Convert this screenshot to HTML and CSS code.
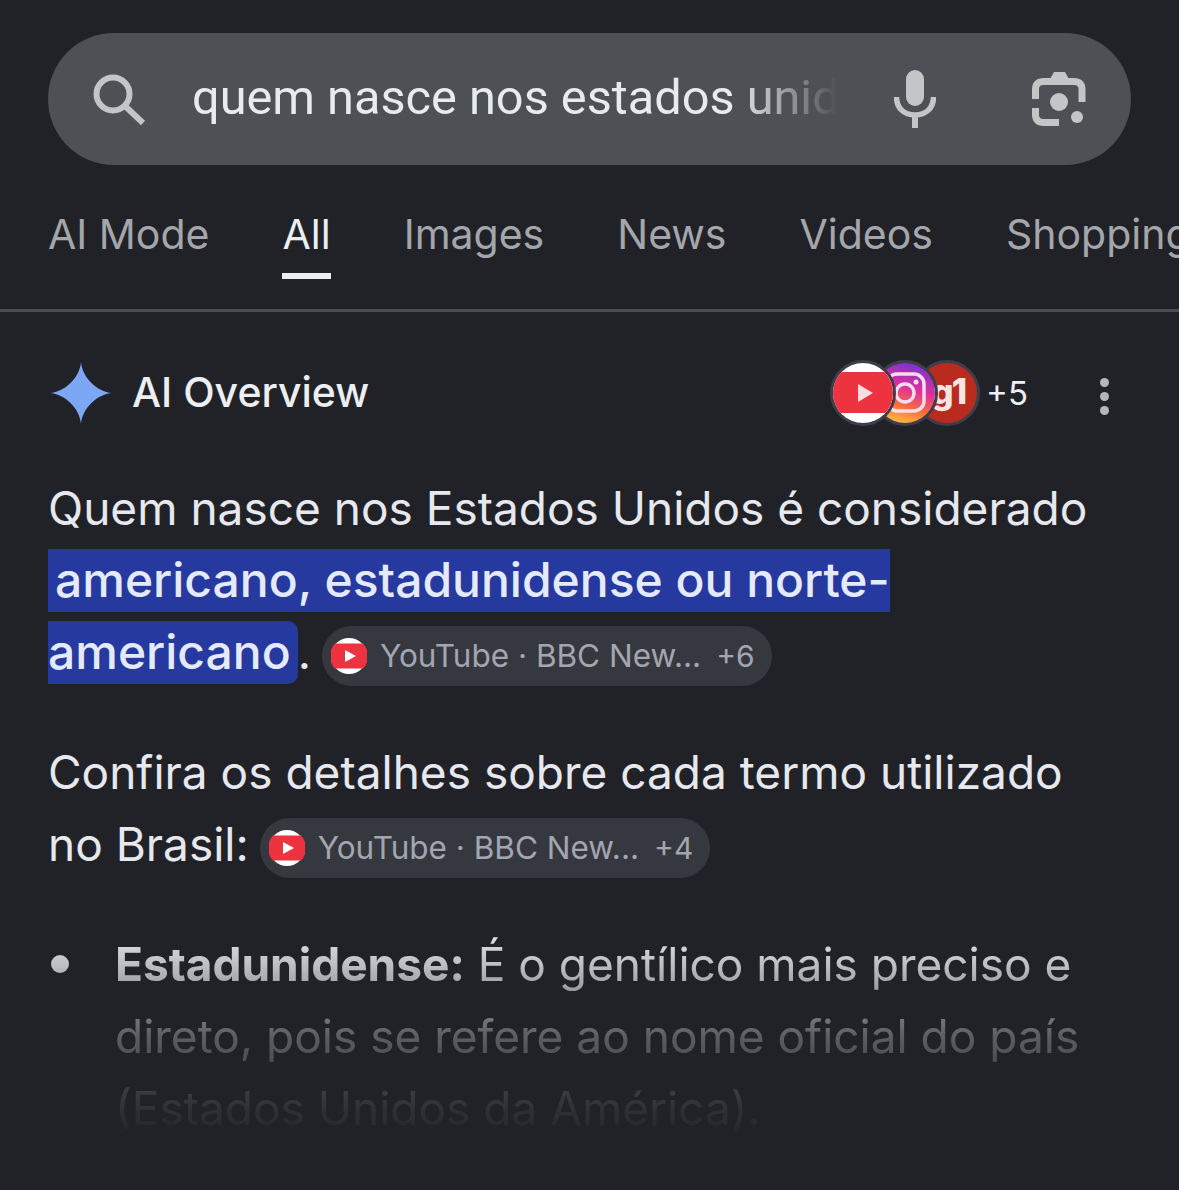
FILE: index.html
```html
<!DOCTYPE html>
<html lang="en">
<head>
    <meta charset="UTF-8">
    <meta name="viewport" content="width=device-width, initial-scale=1.0">
    <title>quem nasce nos estados unidos</title>
    <link rel="stylesheet" href="styles.css">
</head>
<body>
    <div class="search-bar">
        <svg class="search-icon" viewBox="0 0 54 54" width="54" height="54">
            <circle cx="21" cy="21" r="16.500" fill="none" stroke="#c4c5c7" stroke-width="6"/>
            <path d="M33 33 L51 50" fill="none" stroke="#c4c5c7" stroke-width="6"/>
        </svg>
        <div class="search-text">quem nasce nos estados unidos</div>
        <svg class="mic-icon" viewBox="0 0 42 58" width="42" height="58">
            <rect x="12" y="0" width="18" height="36" rx="9" fill="#c4c5c7"/>
            <path d="M2.500 27 C2.500 38 10 45 21 45 C32 45 39.500 38 39.500 27" fill="none" stroke="#c4c5c7" stroke-width="5.500"/>
            <rect x="18" y="44" width="6" height="14" fill="#c4c5c7"/>
        </svg>
        <svg class="lens-icon" viewBox="0 0 56 56" width="56" height="56">
            <path d="M19 8 L23 1 H34 L38 8 Z" fill="#c4c5c7"/>
            <path d="M4.500 28 V18 C4.500 13 7.500 10.500 12.500 10.500 H43 C48 10.500 51 13 51 18 V31" fill="none" stroke="#c4c5c7" stroke-width="7"/>
            <path d="M4.500 37 V44 C4.500 49 7.500 51.500 12.500 51.500 H28" fill="none" stroke="#c4c5c7" stroke-width="7"/>
            <circle cx="28" cy="31" r="9" fill="#c4c5c7"/>
            <circle cx="46" cy="46" r="6" fill="#c4c5c7"/>
        </svg>
    </div>

    <div class="tabs">
        <a class="tab">AI Mode</a>
        <a class="tab active">All</a>
        <a class="tab">Images</a>
        <a class="tab">News</a>
        <a class="tab">Videos</a>
        <a class="tab">Shopping</a>
    </div>

    <div class="overview-head">
        <svg class="spark" viewBox="0 0 62 62" width="62" height="62">
            <path d="M31 0 C32 15 47 30 62 31 C47 32 32 47 31 62 C30 47 15 32 0 31 C15 30 30 15 31 0 Z" fill="#7ba7f5"/>
        </svg>
        <div class="overview-title">AI Overview</div>
        <div class="sources">
            <div class="source-icon yt-big">
                <svg viewBox="0 0 60 60" width="60" height="60">
                    <rect width="60" height="60" fill="#fff"/>
                    <rect y="9" width="60" height="41" fill="#ee3340"/>
                    <path d="M25 21 L40 30 L25 39 Z" fill="#f7dfe0"/>
                </svg>
            </div>
            <div class="source-icon insta">
                <svg viewBox="0 0 60 60" width="60" height="60">
                    <defs>
                        <linearGradient id="ig" x1="0.300" y1="1" x2="0.600" y2="0">
                            <stop offset="0" stop-color="#fdc043"/>
                            <stop offset="0.300" stop-color="#f6703c"/>
                            <stop offset="0.600" stop-color="#e0309a"/>
                            <stop offset="1" stop-color="#7a34d0"/>
                        </linearGradient>
                    </defs>
                    <rect width="60" height="60" fill="url(#ig)"/>
                    <rect x="12" y="11" width="37" height="37" rx="10" fill="none" stroke="#fbdcec" stroke-width="3.500"/>
                    <circle cx="30" cy="30" r="9" fill="none" stroke="#fbdcec" stroke-width="3.500"/>
                    <circle cx="41" cy="19" r="2.500" fill="#fbdcec"/>
                </svg>
            </div>
            <div class="source-icon g1">g1</div>
            <div class="more-count">+5</div>
        </div>
        <div class="dots"><span></span><span></span><span></span></div>
    </div>

    <div class="answer">
        <p class="para">Quem nasce nos Estados Unidos é considerado<br><mark class="hl">americano, estadunidense ou norte-<br>americano</mark>.<span class="chip">
            <svg class="chip-yt" viewBox="0 0 36 36" width="36" height="36">
                <circle cx="18" cy="18" r="18" fill="#fff"/>
                <path d="M4 5.500 H32 A18 18 0 0 1 32 30.500 H4 A18 18 0 0 1 4 5.500 Z" fill="#ee3340"/>
                <path d="M14 12 L25 18 L14 24 Z" fill="#fff"/>
            </svg>
            <span class="chip-label">YouTube · BBC New...</span><span class="chip-more">+6</span></span></p>

        <p class="para second">Confira os detalhes sobre cada termo utilizado<br>no Brasil:<span class="chip">
            <svg class="chip-yt" viewBox="0 0 36 36" width="36" height="36">
                <circle cx="18" cy="18" r="18" fill="#fff"/>
                <path d="M4 5.500 H32 A18 18 0 0 1 32 30.500 H4 A18 18 0 0 1 4 5.500 Z" fill="#ee3340"/>
                <path d="M14 12 L25 18 L14 24 Z" fill="#fff"/>
            </svg>
            <span class="chip-label">YouTube · BBC New...</span><span class="chip-more">+4</span></span></p>

        <ul class="list">
            <li><b>Estadunidense:</b> É o gentílico mais preciso e<br>direto, pois se refere ao nome oficial do país<br>(Estados Unidos da América).</li>
        </ul>
    </div>
</body>
</html>
```

FILE: styles.css
```css
* {
    box-sizing: border-box;
    margin: 0;
    padding: 0;
}
html, body {
    height: 100%;
    overflow: hidden;
}
body {
    background: #212227;
    color: #e8eaed;
    font-family: Inter, "Noto Sans", sans-serif;
    padding-top: 33px;
}

.search-bar {
    height: 132px;
    margin: 0 48px;
    background: #4d5054;
    border-radius: 66px;
    display: flex;
    align-items: center;
    padding: 0 44px;
}
.search-icon {
    flex: none;
    margin-top: 2px;
}
.search-text {
    width: 646px;
    margin-left: 46px;
    padding-bottom: 4px;
    font-family: Roboto, "Liberation Sans", sans-serif;
    font-size: 48.700px;
    color: #e8eaed;
    white-space: nowrap;
    overflow: hidden;
    -webkit-mask-image: linear-gradient(to right, #000 84%, transparent 100%);
    mask-image: linear-gradient(to right, #000 84%, transparent 100%);
}
.mic-icon {
    flex: none;
    margin-left: 56px;
}
.lens-icon {
    flex: none;
    margin-left: 95px;
}

.tabs {
    height: 147px;
    display: flex;
    gap: 73px;
    padding-left: 48px;
    border-bottom: 3px solid #4a4c50;
    white-space: nowrap;
    overflow: hidden;
}
.tab {
    padding-top: 44px;
    font-size: 41px;
    color: #a4a6ab;
}
.tab.active {
    color: #eceef2;
    height: 114px;
    border-bottom: 6px solid #eceef2;
}

.overview-head {
    height: 82px;
    margin-top: 40px;
    display: flex;
    align-items: center;
    padding-left: 50px;
}
.spark {
    flex: none;
}
.overview-title {
    margin-left: 20px;
    margin-bottom: 2px;
    font-size: 41px;
    font-weight: 500;
    color: #eceef2;
}
.sources {
    display: flex;
    align-items: center;
    margin-left: auto;
}
.source-icon {
    width: 66px;
    height: 66px;
    border-radius: 50%;
    border: 3px solid #3c3f4b;
    overflow: hidden;
    flex: none;
}
.yt-big {
    position: relative;
    z-index: 3;
}
.insta {
    position: relative;
    z-index: 2;
    margin-left: -24px;
}
.g1 {
    margin-left: -24px;
    background: #b82b1e;
    color: #f6e6e2;
    font-size: 35px;
    font-weight: 800;
    line-height: 56px;
    text-align: right;
    padding-right: 12px;
    letter-spacing: -2px;
}
.more-count {
    margin-left: 6px;
    font-size: 33px;
    color: #eceef2;
}
.dots {
    display: flex;
    flex-direction: column;
    gap: 5px;
    margin: 6px 70px 0 72px;
}
.dots span {
    width: 9px;
    height: 9px;
    border-radius: 50%;
    background: #b5b6b8;
}

.answer {
    margin-top: 38px;
    padding-left: 48px;
    font-size: 46px;
    line-height: 72px;
    color: #e6e8ee;
    white-space: nowrap;
}
.para.second {
    margin-top: 48px;
}
.hl {
    background: #25399e;
    color: #e4e9fb;
    font-size: 48px;
    font-weight: 500;
    padding: 1px 7px 3px;
    border-radius: 0 10px 10px 0;
}
.chip {
    display: inline-flex;
    align-items: center;
    height: 60px;
    margin-left: 11px;
    padding: 0 17px 0 9px;
    border-radius: 30px;
    background: #363840;
    color: #a3a6b0;
    font-size: 31.500px;
    line-height: 60px;
    vertical-align: -5px;
}
.chip-yt {
    flex: none;
}
.chip-label {
    margin-left: 13px;
}
.chip-more {
    margin-left: 15px;
    font-size: 30px;
}

.list {
    margin-top: 48px;
    list-style: none;
    -webkit-mask-image: linear-gradient(to bottom, #000 0, rgba(0,0,0,0.8) 36px, rgba(0,0,0,0.3) 108px, rgba(0,0,0,0.08) 180px, transparent 216px);
    mask-image: linear-gradient(to bottom, #000 0, rgba(0,0,0,0.8) 36px, rgba(0,0,0,0.3) 108px, rgba(0,0,0,0.08) 180px, transparent 216px);
}
.list li {
    position: relative;
    padding-left: 67px;
}
.list li::before {
    content: "";
    position: absolute;
    left: 3px;
    top: 27px;
    width: 18px;
    height: 18px;
    border-radius: 50%;
    background: #e6e8ee;
}
.list b {
    font-weight: 700;
}
```
